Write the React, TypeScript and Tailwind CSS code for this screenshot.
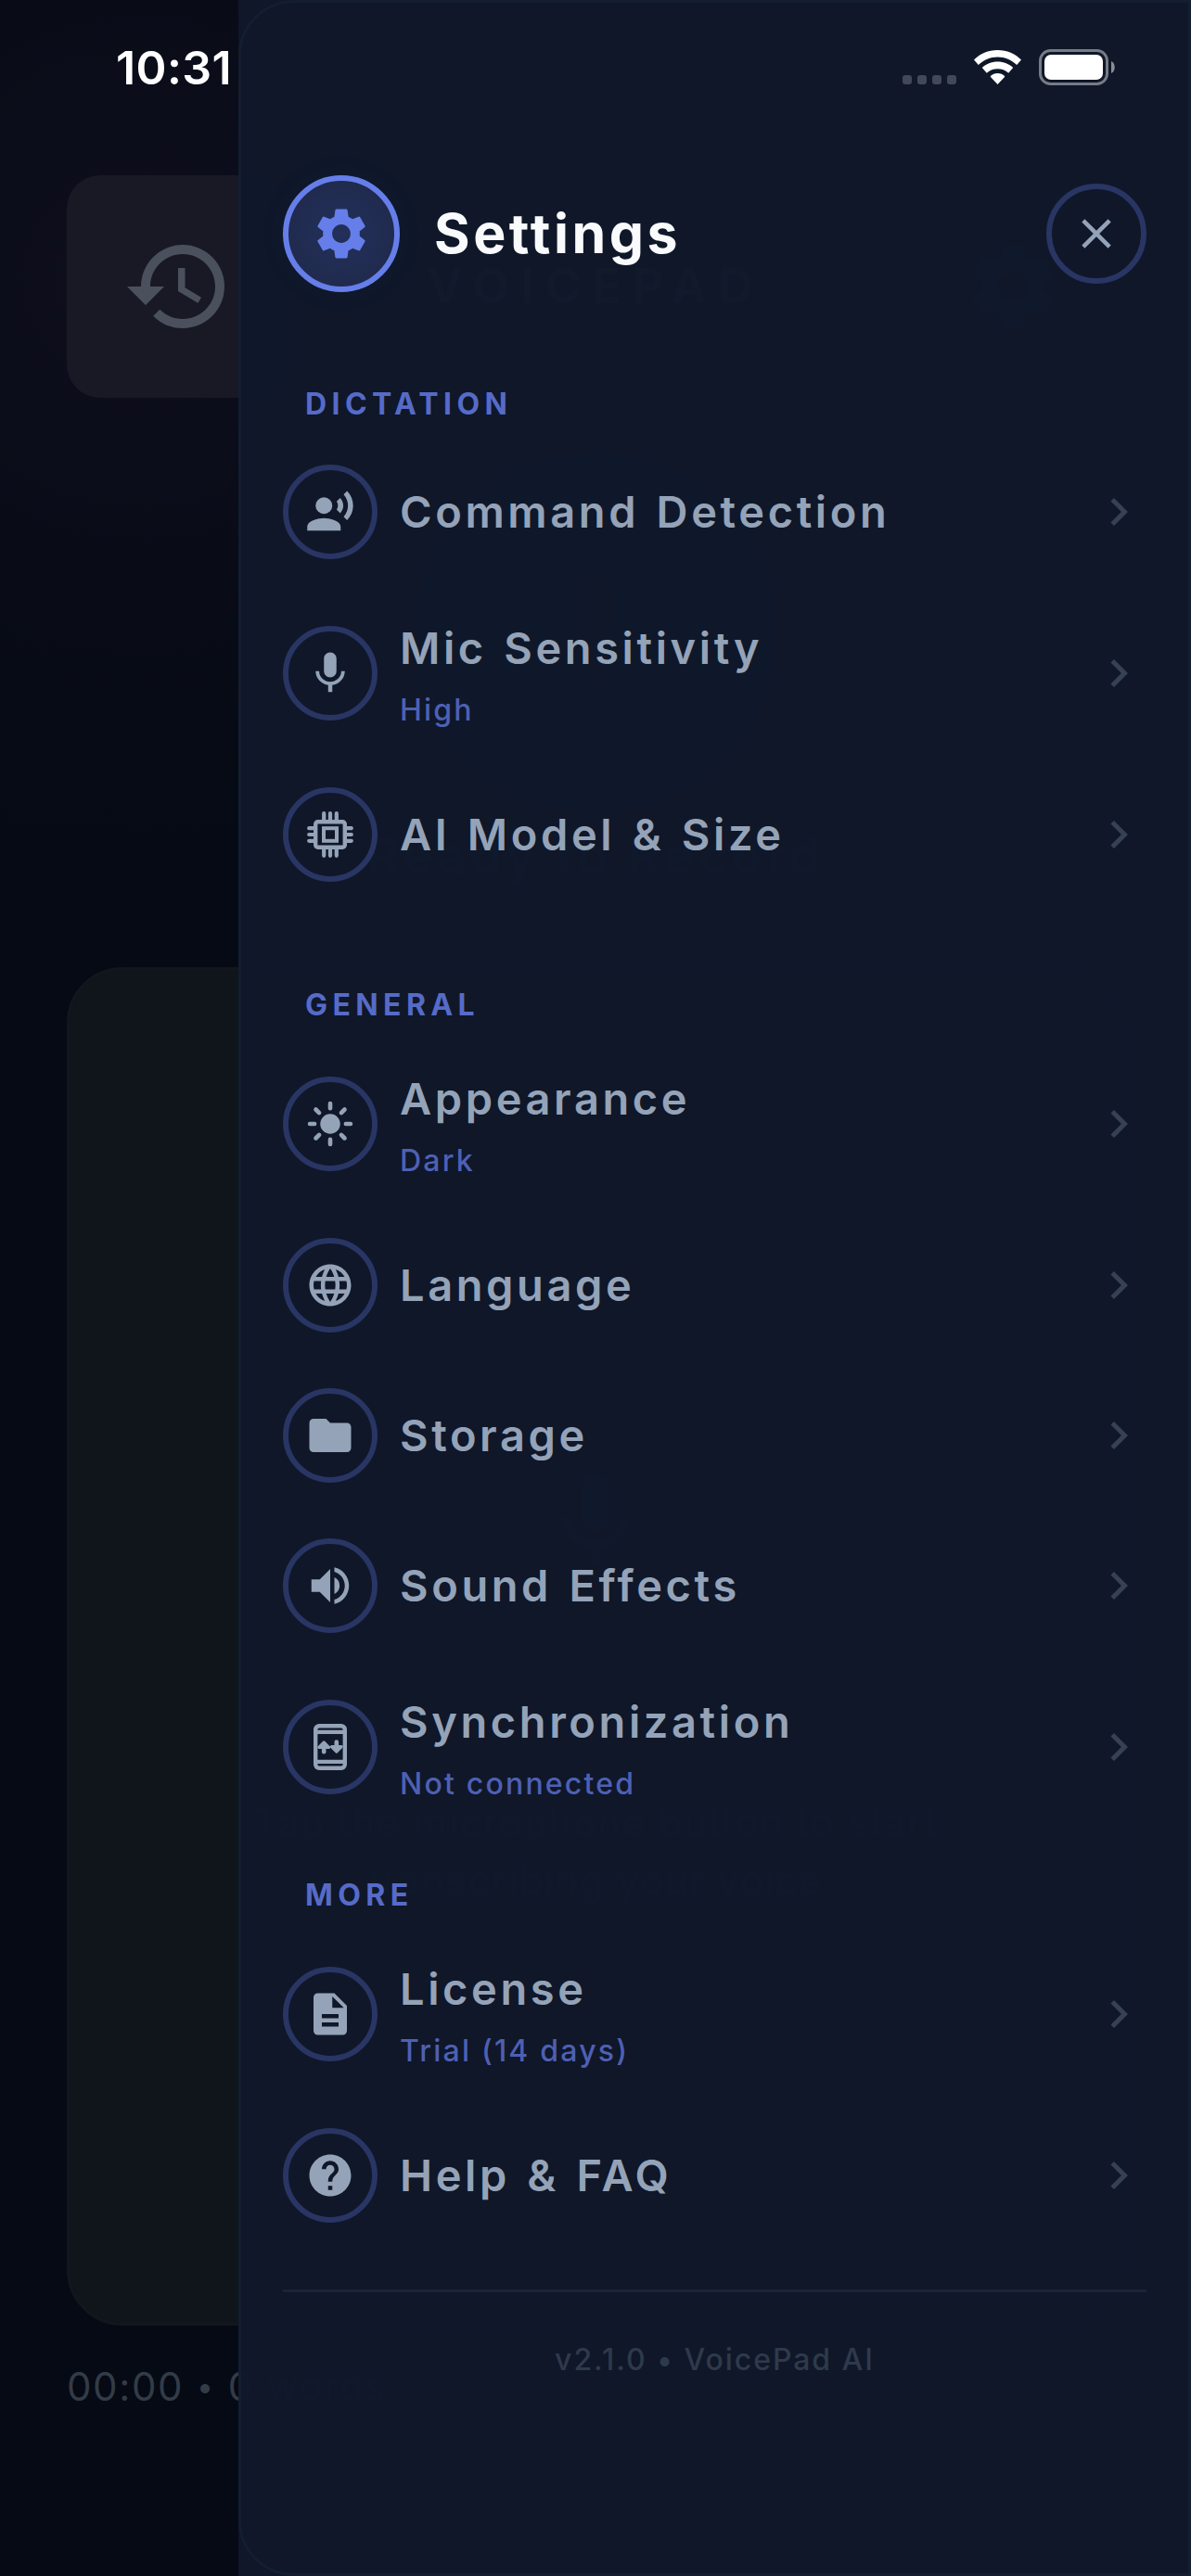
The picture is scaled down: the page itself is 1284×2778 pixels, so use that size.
import { MdHistory, MdSettings, MdClose, MdChevronRight, MdRecordVoiceOver, MdMic, MdLanguage, MdFolder, MdVolumeUp, MdDescription, MdHelp } from 'react-icons/md';
import { IoSunny } from 'react-icons/io5';
import type { ComponentType } from 'react';

interface Item {
  label: string;
  sub?: string;
  icon: ComponentType<{ size?: number | string }>;
}

function Chip({ size = 54 }: { size?: number | string }) {
  return (
    <svg width={size} height={size} viewBox="0 0 54 54" fill="none" stroke="currentColor">
      <rect x="11.2" y="13.2" width="31.6" height="27.6" rx="2.5" strokeWidth="4.4" />
      <rect x="20" y="20.2" width="14" height="13.6" strokeWidth="4" />
      <path
        d="M20.2 4.2V12M27 4.2V12M33.8 4.2V12M20.2 42v7.8M27 42v7.8M33.8 42v7.8M4.2 20.2H10M4.2 27H10M4.2 33.8H10M44 20.2h5.8M44 27h5.8M44 33.8h5.8"
        strokeWidth="4.2"
        strokeLinecap="round"
      />
    </svg>
  );
}

function SyncPhone({ size = 54 }: { size?: number | string }) {
  return (
    <svg width={size} height={size} viewBox="0 0 54 54" fill="none" stroke="currentColor">
      <rect x="11.2" y="4.2" width="31.6" height="45.6" rx="4" strokeWidth="4.4" />
      <path d="M11 10.9h32M11 42.8h32" strokeWidth="4.2" />
      <path d="M20.2 32.2V24M33.800 21.5V30" strokeWidth="4.6" strokeLinecap="round" />
      <path d="M20.2 21.8l-5.4 5.6h10.8ZM33.8 32.2l-5.400-5.6h10.8Z" fill="currentColor" strokeWidth="3" strokeLinejoin="round" />
    </svg>
  );
}

const DICTATION: Item[] = [
  { label: 'Command Detection', icon: MdRecordVoiceOver },
  { label: 'Mic Sensitivity', sub: 'High', icon: MdMic },
  { label: 'AI Model & Size', icon: Chip },
];

const GENERAL: Item[] = [
  { label: 'Appearance', sub: 'Dark', icon: IoSunny },
  { label: 'Language', icon: MdLanguage },
  { label: 'Storage', icon: MdFolder },
  { label: 'Sound Effects', icon: MdVolumeUp },
  { label: 'Synchronization', sub: 'Not connected', icon: SyncPhone },
];

const MORE: Item[] = [
  { label: 'License', sub: 'Trial (14 days)', icon: MdDescription },
  { label: 'Help & FAQ', icon: MdHelp },
];

function Row({ item }: { item: Item }) {
  const Icon = item.icon;
  return (
    <div className={`flex items-center ${item.sub ? 'h-[186px]' : 'h-[162px]'}`}>
      <div className="flex size-[102px] shrink-0 items-center justify-center rounded-full border-[6px] border-[#293563] text-[#94a3b8]">
        <Icon size={54} />
      </div>
      <div className="ml-[24px] flex-1">
        <div className="text-[47px] leading-[60px] font-semibold tracking-[3.6px] [word-spacing:3px] whitespace-nowrap text-[#94a3b8]">
          {item.label}
        </div>
        {item.sub && (
          <div className="mt-[16px] -mb-[4px] text-[32px] leading-[42px] font-medium tracking-[2.2px] text-[#4e60b4]">{item.sub}</div>
        )}
      </div>
      <MdChevronRight size={60} className="text-[#364154]" />
    </div>
  );
}

function Section({ title, items, className = '' }: { title: string; items: Item[]; className?: string }) {
  return (
    <section className={className}>
      <h2 className="h-[56px] pt-px pl-[24px] text-[32px] leading-[40px] font-bold tracking-[5.4px] text-[#566bc8]">{title}</h2>
      {items.map((item) => (
        <Row key={item.label} item={item} />
      ))}
    </section>
  );
}

// The recorder screen that stays dimmed behind the drawer
function Recorder() {
  return (
    <div className="flex h-full w-full flex-col bg-[radial-gradient(circle_at_150px_300px,#0f0f1e_0px,#0c0d1b_150px,#090c17_320px,#050a14_620px)] px-[72px] pt-[189px] text-[#333b47]">
      <div className="flex items-center justify-between">
        <div className="flex size-[240px] items-center justify-center rounded-[36px] bg-[#191926] text-[#4a505c]">
          <MdHistory size={120} />
        </div>
        <div className="text-[52px] font-bold tracking-[12px] text-[#3a404c]">VOICEPAD</div>
        <div className="flex size-[240px] items-center justify-center rounded-[36px] bg-[#11151c]">
          <MdSettings size={110} />
        </div>
      </div>
      <div className="mt-[58px] flex size-[390px] items-center justify-center self-center rounded-full bg-[#1c2028]">
        <MdMic size={150} className="text-[#0a0d14]" />
      </div>
      <div className="mt-[16px] self-center text-[54px] leading-[60px] font-semibold tracking-[4.4px]">Ready to Record</div>
      <div className="mt-[90px] flex h-[1465px] flex-col items-center rounded-[60px] border-[3px] border-[#12171e] bg-[#10151b] pt-[535px]">
        <MdMic size={120} />
        <p className="mt-[232px] w-[760px] text-center text-[42px] leading-[63px] tracking-[1.5px] text-[#2a313b]">
          Tap the microphone button to start transcribing your voice
        </p>
      </div>
      <div className="mt-[36px] flex text-[42px] leading-[60px] tracking-[1.6px] whitespace-pre">
        00:00<span className="px-[14px] text-[32px]">•</span>0 words
      </div>
    </div>
  );
}

function StatusBar() {
  return (
    <div className="absolute inset-x-0 top-0 flex h-[144px] justify-between pl-[125px] pr-[81px] text-white">
      <div className="mt-[43px] text-[50px] leading-[60px] font-semibold tracking-[0.4px]">10:31</div>
      <div className="mt-[53px] flex items-start">
        <div className="mt-[28px] flex gap-[6px]">
          {[0, 1, 2, 3].map((n) => (
            <span key={n} className="size-[10px] rounded-[3px] bg-[#434858]" />
          ))}
        </div>
        <svg className="ml-[19px]" width="51" height="38" viewBox="0 0 51 38" fill="currentColor">
          <path d="M25.5 1C35.5 1 44.5 5 51 11.5L46.2 17C40.7 11.8 33.5 8.5 25.5 8.5S10.3 11.8 4.8 17L0 11.5C6.5 5 15.5 1 25.5 1Z" />
          <path d="M25.5 13.5c6.6 0 12.4 2.5 16.7 6.5l-5 5.8a17.5 17.5 0 0 0-23.4 0l-5-5.8c4.3-4 10.1-6.5 16.7-6.5Z" />
          <path d="M25.5 26c3 0 5.6 1.1 7.6 2.9v1.2l-7.6 7.9-7.6-7.9v-1.2c2-1.8 4.6-2.9 7.6-2.9Z" />
        </svg>
        <svg className="ml-[19px]" width="83" height="39" viewBox="0 0 83 39">
          <rect x="1.5" y="1.5" width="72" height="36" rx="11" fill="none" stroke="#777b84" strokeWidth="3" />
          <rect x="6" y="6" width="63" height="27" rx="7" fill="white" />
          <path d="M78 13c5 2 5 11 0 13Z" fill="#8a8d94" />
        </svg>
      </div>
    </div>
  );
}

export default function App() {
  return (
    <div className="relative h-[2778px] w-[1284px] overflow-hidden font-['Inter','Liberation_Sans',sans-serif]">
      <Recorder />
      <div className="absolute inset-y-0 right-0 w-[1027px] bg-[#0f182a]/97">
        <div className="flex h-full flex-col rounded-l-[60px] border-[3px] border-[#131e30] pt-[186px] pr-[45px] pl-[45px]">
          <header className="flex h-[126px] items-center">
            <div className="flex size-[126px] items-center justify-center rounded-full border-[6px] border-[#667eea] bg-[radial-gradient(circle,#22305a,#1f2849)] text-[#667eea] shadow-[0_0_36px_rgba(102,126,234,0.04)]">
              <MdSettings size={66} />
            </div>
            <h1 className="ml-[37px] flex-1 text-[59px] leading-[72px] font-bold tracking-[3.5px] text-[#f8fafc]">Settings</h1>
            <div className="flex size-[108px] items-center justify-center rounded-full border-[6px] border-[#293563] text-[#94a3b8]">
              <MdClose size={54} />
            </div>
          </header>
          <Section className="mt-[100px]" title="DICTATION" items={DICTATION} />
          <Section className="mt-[82px]" title="GENERAL" items={GENERAL} />
          <Section className="mt-[46px]" title="MORE" items={MORE} />
          <footer className="mt-[42px] border-t-[3px] border-[#1a2436] pt-[52px] text-center text-[32px] leading-[42px] font-medium tracking-[1.95px] text-[#2e3a4b]">
            v2.1.0 • VoicePad AI
          </footer>
        </div>
      </div>
      <StatusBar />
    </div>
  );
}
